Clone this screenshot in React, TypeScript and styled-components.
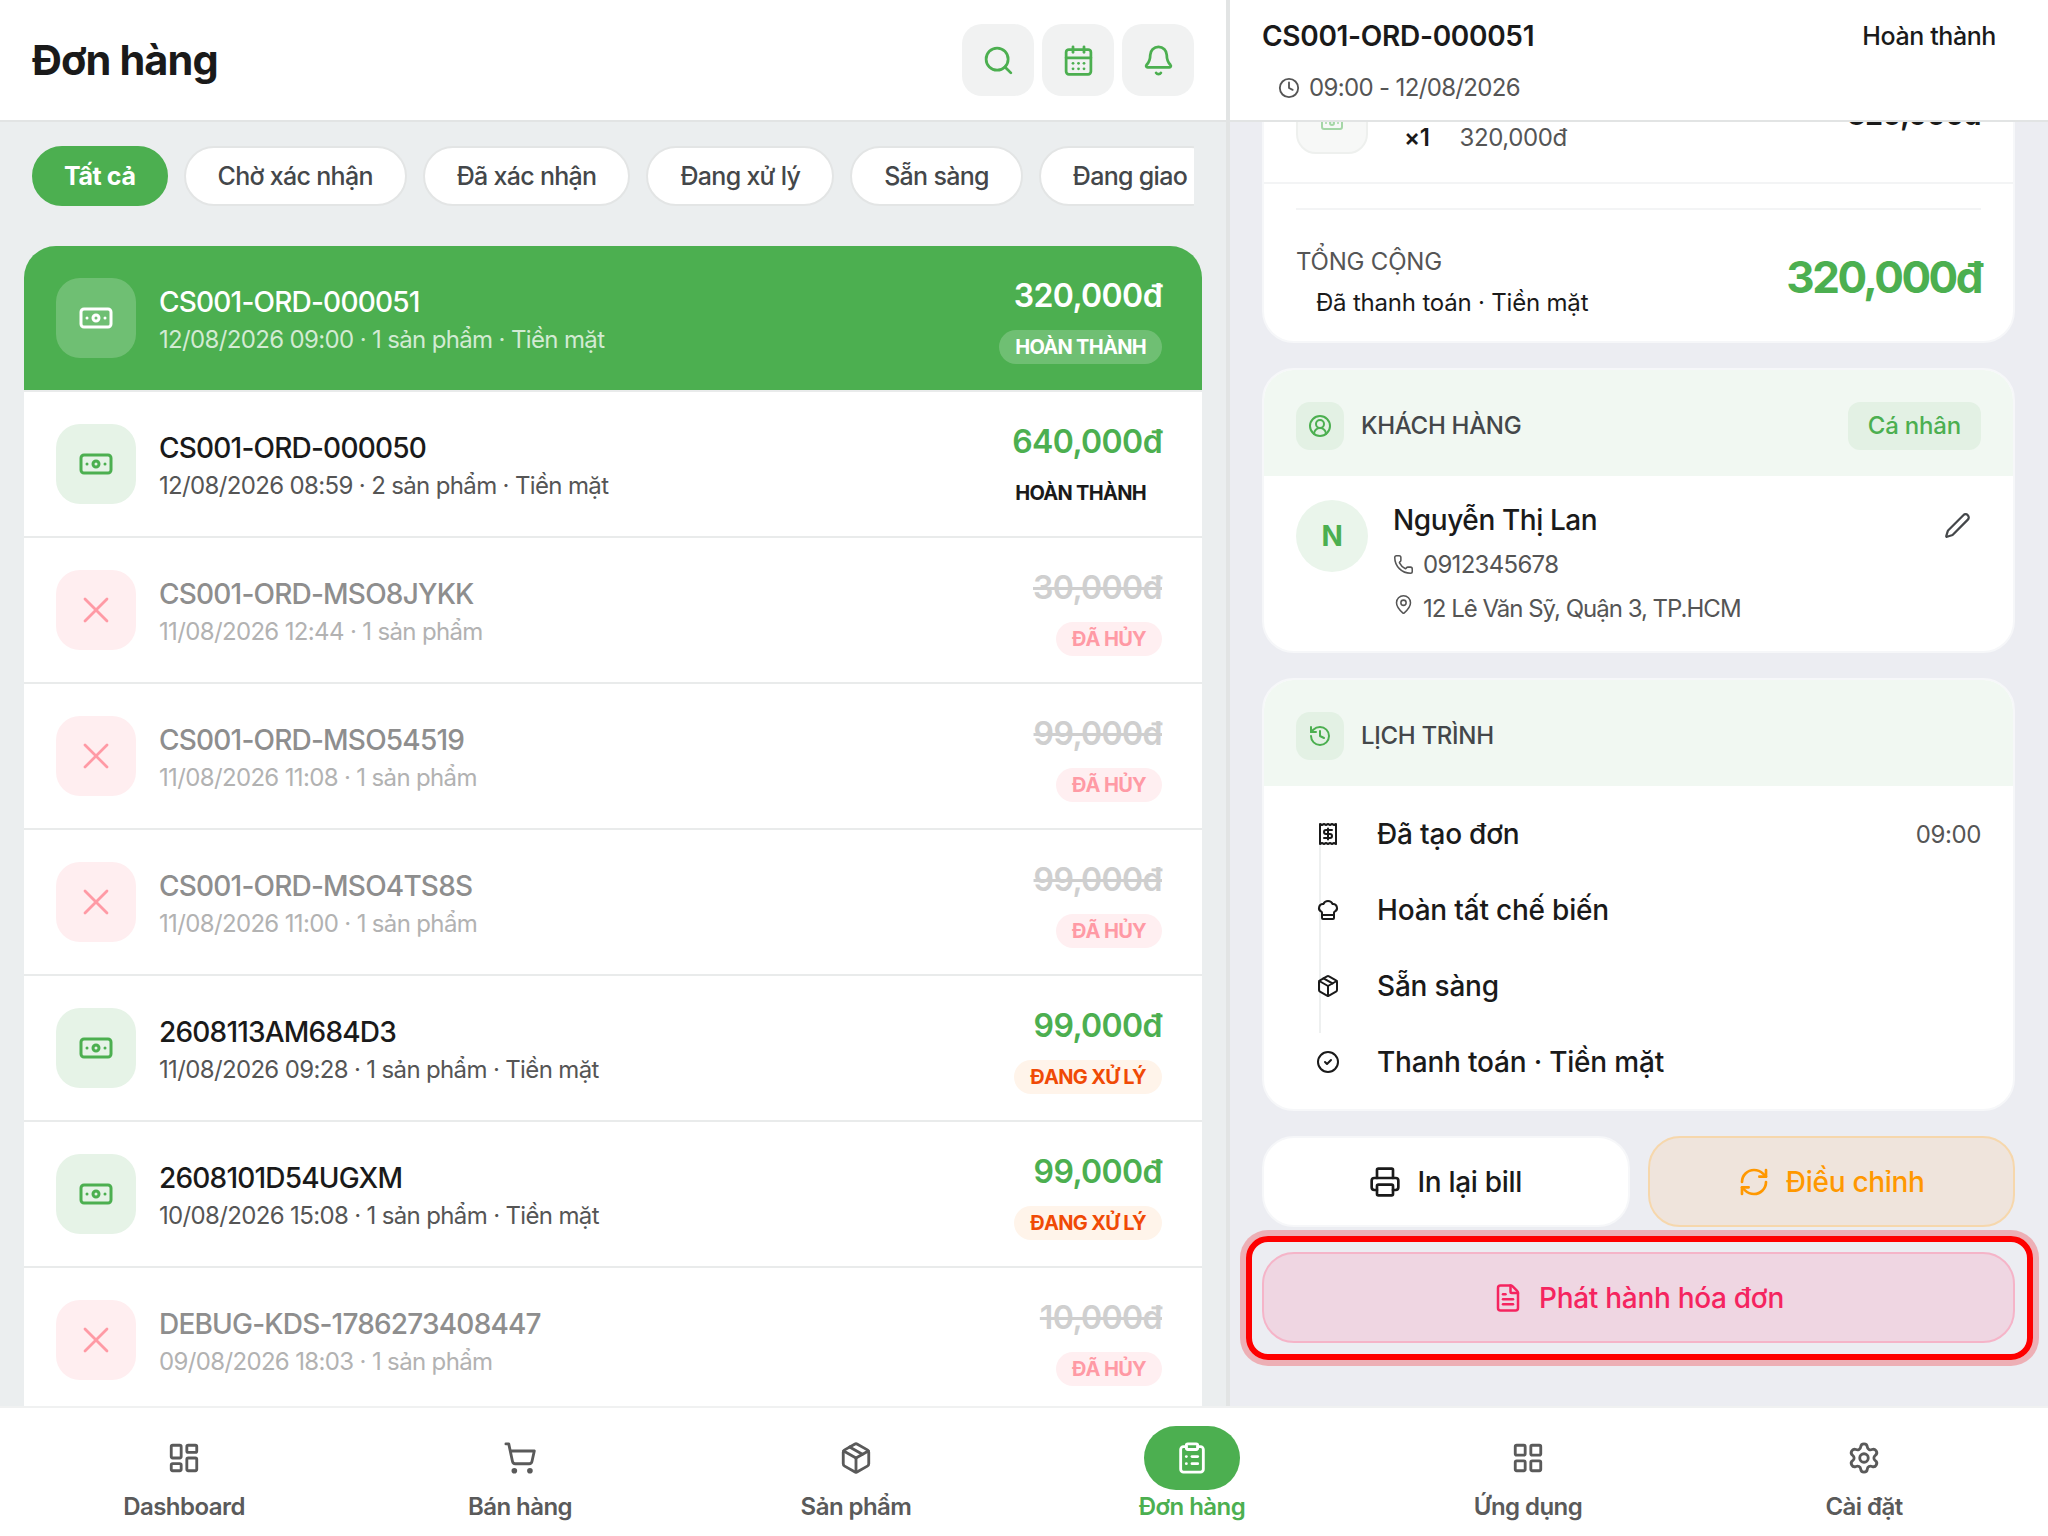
import React from 'react'
import styled, { createGlobalStyle } from 'styled-components'
import {
  Search, CalendarDays, Bell, Banknote, X, CircleUserRound, History, Receipt, ChefHat, Package,
  CircleCheck, Printer, RefreshCw, FileText, LayoutDashboard, ShoppingCart, ClipboardList, LayoutGrid,
  Settings, Phone, MapPin, Pen, Clock,
} from 'lucide-react'

const GlobalStyle = createGlobalStyle`
  html, body { margin: 0; padding: 0; background: #fff; }
  * { box-sizing: border-box; }
  body { font-family: Inter, "Noto Sans", sans-serif; color: #1a1a1a; letter-spacing: -0.4px; }
`

const GREEN = '#4caf50'

const Page = styled.div`
  width: 2048px;
  height: 1536px;
  display: flex;
  flex-direction: column;
  overflow: hidden;
`

const Main = styled.div`
  flex: 1;
  min-height: 0;
  display: flex;
`

const LeftPane = styled.section`
  width: 1226px;
  display: flex;
  flex-direction: column;
  background: #ebeeef;
`

const TopBar = styled.header`
  height: 122px;
  flex: none;
  display: flex;
  align-items: center;
  justify-content: space-between;
  padding: 0 32px;
  background: #fff;
  border-bottom: 2px solid #e2e4e4;
`

const Title = styled.h1`
  margin: 0 0 1px;
  font-size: 41.5px;
  font-weight: 700;
  letter-spacing: -0.9px;
`

const IconActions = styled.div`
  display: flex;
  gap: 8px;
`

const IconAction = styled.button`
  width: 72px;
  height: 72px;
  border: 0;
  padding: 0;
  border-radius: 20px;
  background: #f1f2f2;
  color: ${GREEN};
  display: flex;
  align-items: center;
  justify-content: center;
`

const Chips = styled.div`
  flex: none;
  display: flex;
  gap: 16px;
  margin: 24px 32px 40px;
  overflow: hidden;
`

const Chip = styled.div<{ $active?: boolean }>`
  flex: none;
  height: 60px;
  padding: 0 ${(p) => (p.$active ? 30 : 32)}px;
  display: flex;
  align-items: center;
  border-radius: 30px;
  font-size: 25px;
  font-weight: ${(p) => (p.$active ? 700 : 500)};
  letter-spacing: ${(p) => (p.$active ? -0.4 : -0.7)}px;
  background: ${(p) => (p.$active ? GREEN : '#fff')};
  color: ${(p) => (p.$active ? '#fff' : '#44474a')};
  border: 2px solid ${(p) => (p.$active ? GREEN : '#e3e5e5')};
`

const OrderList = styled.div`
  flex: 1;
  min-height: 0;
  margin: 0 24px;
  border-radius: 32px 32px 0 0;
  overflow: hidden;
`

type Kind = 'selected' | 'normal' | 'cancelled'

const Row = styled.div<{ $kind: Kind }>`
  height: 146px;
  display: flex;
  align-items: center;
  padding: 0 40px 0 32px;
  background: ${(p) => (p.$kind === 'selected' ? GREEN : '#fff')};
  border-bottom: 2px solid #e9ebeb;
`

const RowIcon = styled.div<{ $kind: Kind }>`
  flex: none;
  width: 80px;
  height: 80px;
  border-radius: 24px;
  display: flex;
  align-items: center;
  justify-content: center;
  margin-right: 23px;
  background: ${(p) => (p.$kind === 'selected' ? 'rgba(255,255,255,.2)' : p.$kind === 'cancelled' ? '#ffeef0' : '#e6f3e7')};
  color: ${(p) => (p.$kind === 'selected' ? '#fff' : p.$kind === 'cancelled' ? '#ff9aa5' : GREEN)};
`

const RowText = styled.div`
  flex: 1;
  min-width: 0;
  padding-top: 4px;
`

const OrderCode = styled.div<{ $kind: Kind }>`
  font-size: 28px;
  line-height: 36px;
  font-weight: 500;
  letter-spacing: -0.8px;
  color: ${(p) => (p.$kind === 'selected' ? '#fff' : p.$kind === 'cancelled' ? '#8e8e8e' : '#1a1a1a')};
`

const OrderMeta = styled.div<{ $kind: Kind }>`
  margin-top: 4px;
  font-size: 24px;
  line-height: 32px;
  letter-spacing: -0.65px;
  color: ${(p) => (p.$kind === 'selected' ? 'rgba(255,255,255,.75)' : p.$kind === 'cancelled' ? '#b2b2b2' : '#555')};
`

const RowRight = styled.div`
  display: flex;
  flex-direction: column;
  align-items: flex-end;
  gap: 14px;
  margin-top: 3px;
`

const Amount = styled.div<{ $kind: Kind }>`
  font-size: 32px;
  line-height: 40px;
  font-weight: 600;
  letter-spacing: -0.6px;
  color: ${(p) => (p.$kind === 'selected' ? '#fff' : p.$kind === 'cancelled' ? '#cfcfcf' : GREEN)};
  text-decoration: ${(p) => (p.$kind === 'cancelled' ? 'line-through' : 'none')};
`

type Tone = 'onGreen' | 'plain' | 'cancel' | 'busy'

const Badge = styled.div<{ $tone: Tone }>`
  height: 34px;
  padding: 0 16px;
  display: flex;
  align-items: center;
  border-radius: 17px;
  font-size: 20px;
  font-weight: 700;
  letter-spacing: -0.7px;
  background: ${(p) => ({ onGreen: 'rgba(255,255,255,.2)', plain: 'transparent', cancel: '#ffeff1', busy: '#fff4ea' })[p.$tone]};
  color: ${(p) => ({ onGreen: '#fff', plain: '#1a1a1a', cancel: '#ff9aa5', busy: '#f04a06' })[p.$tone]};
`

const RightPane = styled.section`
  flex: 1;
  min-width: 0;
  display: flex;
  flex-direction: column;
  background: #ecedf2;
  border-left: 4px solid #e2e4e4;
`

const DetailHead = styled.header`
  flex: none;
  height: 122px;
  padding: 20px 52px 0 32px;
  background: #fff;
  border-bottom: 2px solid #e2e4e4;
`

const HeadLine = styled.div`
  display: flex;
  justify-content: space-between;
  align-items: center;
  height: 32px;
`

const DetailCode = styled.div`
  font-size: 28px;
  font-weight: 600;
  letter-spacing: -0.3px;
`

const DetailStatus = styled.div`
  font-size: 25px;
  font-weight: 500;
`

const TimeLine = styled.div`
  display: flex;
  align-items: center;
  gap: 9px;
  margin: 21px 0 0 16px;
  font-size: 24px;
  letter-spacing: -0.65px;
  color: #555;
`

const DetailBody = styled.div`
  flex: 1;
  min-height: 0;
  overflow: hidden;
  display: flex;
  flex-direction: column;
  justify-content: flex-end;
  gap: 25px;
  padding: 0 33px 63px 32px;
`

const Card = styled.div`
  flex: none;
  background: #fff;
  border-radius: 32px;
  border: 2px solid #f6f7f9;
  overflow: hidden;
`

const ItemRow = styled.div`
  display: flex;
  align-items: flex-end;
  padding: 0 32px 28px;
  border-bottom: 2px solid #f3f4f5;
`

const ItemThumb = styled.div`
  flex: none;
  width: 72px;
  height: 72px;
  border-radius: 20px;
  background: #f7f8f7;
  border: 2px solid #eef0ee;
  color: #a5d6a7;
  display: flex;
  align-items: center;
  justify-content: center;
  margin-right: 36px;
  svg {
    margin-top: 10px;
  }
`

const ItemQty = styled.div`
  font-size: 24px;
  font-weight: 600;
  line-height: 30px;
  margin: 0 30px 1px 0;
`

const ItemUnit = styled.div`
  flex: 1;
  font-size: 24px;
  line-height: 30px;
  color: #555;
  margin-bottom: 1px;
`

const ItemTotal = styled.div`
  font-size: 28px;
  line-height: 34px;
  font-weight: 700;
  margin-bottom: 22px;
`

const TotalBlock = styled.div`
  margin: 24px 32px 0;
  padding: 37px 0 23px;
  border-top: 2px solid #f3f4f5;
  display: flex;
  justify-content: space-between;
  align-items: center;
`

const TotalLabel = styled.div`
  font-size: 24px;
  line-height: 30px;
  letter-spacing: -0.2px;
  color: #555;
`

const TotalNote = styled.div`
  font-size: 24px;
  line-height: 30px;
  letter-spacing: -0.2px;
  margin: 11px 0 0 20px;
`

const TotalAmount = styled.div`
  font-size: 44px;
  font-weight: 700;
  color: ${GREEN};
  letter-spacing: -2.5px;
  margin-bottom: 11px;
`

const CardHead = styled.div`
  height: 106px;
  display: flex;
  align-items: center;
  padding: 5px 32px 0;
  background: #f1f8f2;
`

const CardHeadIcon = styled.div`
  flex: none;
  width: 48px;
  height: 48px;
  border-radius: 14px;
  background: #e3f1e4;
  color: ${GREEN};
  display: flex;
  align-items: center;
  justify-content: center;
  margin-right: 17px;
`

const CardHeadTitle = styled.div`
  flex: 1;
  font-size: 24px;
  font-weight: 500;
  letter-spacing: -0.3px;
  color: #44474a;
`

const TypeTag = styled.div`
  height: 48px;
  padding: 0 20px;
  display: flex;
  align-items: center;
  border-radius: 12px;
  background: #e3f1e4;
  color: ${GREEN};
  font-size: 24px;
  font-weight: 500;
  letter-spacing: -0.2px;
`

const CustomerBody = styled.div`
  display: flex;
  padding: 24px 32px 0;
  height: 175px;
`

const Avatar = styled.div`
  flex: none;
  width: 72px;
  height: 72px;
  border-radius: 50%;
  background: #eaf5eb;
  color: ${GREEN};
  font-size: 28px;
  font-weight: 700;
  display: flex;
  align-items: center;
  justify-content: center;
  margin-right: 25px;
`

const CustomerInfo = styled.div`
  flex: 1;
`

const CustomerName = styled.div`
  font-size: 28px;
  font-weight: 500;
  line-height: 36px;
  margin: 2px 0 4px;
`

const InfoLine = styled.div`
  display: flex;
  align-items: center;
  gap: 9px;
  height: 44px;
  font-size: 24px;
  letter-spacing: -0.7px;
  color: #555;
`

const AddressLine = styled(InfoLine)`
  letter-spacing: -1px;
  svg {
    margin-top: -8px;
  }
`

const EditButton = styled.div`
  flex: none;
  color: #44474a;
  padding: 12px 10px 0 0;
`

const Timeline = styled.div`
  position: relative;
  padding: 10px 32px 9px 52px;
  &::before {
    content: '';
    position: absolute;
    left: 55px;
    top: 56px;
    height: 191px;
    width: 2px;
    background: #eef0f0;
  }
`

const StepRow = styled.div`
  position: relative;
  height: 76px;
  display: flex;
  align-items: center;
  color: #1a1a1a;
`

const StepLabel = styled.div`
  flex: 1;
  margin-left: 37px;
  font-size: 28px;
  font-weight: 500;
  letter-spacing: -0.2px;
`

const StepTime = styled.div`
  font-size: 24px;
  color: #555;
`

const ButtonRow = styled.div`
  flex: none;
  display: flex;
  gap: 18px;
`

type BtnTone = 'white' | 'amber' | 'pink'

const ActionButton = styled.div<{ $tone: BtnTone }>`
  flex: 1;
  height: 91px;
  position: relative;
  display: flex;
  align-items: center;
  justify-content: center;
  gap: 16px;
  border-radius: 32px;
  font-size: 28px;
  font-weight: 500;
  letter-spacing: -0.3px;
  background: ${(p) => ({ white: '#fff', amber: '#efe4dc', pink: '#efd6e2' })[p.$tone]};
  color: ${(p) => ({ white: '#1a1a1a', amber: '#ff9800', pink: '#f5245f' })[p.$tone]};
  border: 2px solid ${(p) => ({ white: '#f6f7f9', amber: '#f6d7ac', pink: '#f5b4c8' })[p.$tone]};
`

const HighlightedButton = styled(ActionButton)`
  flex: none;
  &::after {
    content: '';
    position: absolute;
    inset: -18px -20px -19px -18px;
    border: 6px solid #fe0000;
    border-radius: 22px;
    box-shadow: 0 0 0 6px rgba(240, 60, 70, 0.35);
    pointer-events: none;
  }
`

const BottomNav = styled.nav`
  flex: none;
  height: 130px;
  padding: 0 16px;
  display: grid;
  grid-template-columns: repeat(6, 1fr);
  background: #fff;
  border-top: 2px solid #f0f1f1;
`

const NavItem = styled.div<{ $active?: boolean }>`
  display: flex;
  flex-direction: column;
  align-items: center;
  padding-top: 18px;
  font-size: 24px;
  font-weight: 600;
  letter-spacing: -0.55px;
  color: ${(p) => (p.$active ? GREEN : '#5a5a5a')};
`

const NavIcon = styled.div<{ $active?: boolean }>`
  width: 96px;
  height: 64px;
  border-radius: 32px;
  display: flex;
  align-items: center;
  justify-content: center;
  margin-bottom: 2px;
  background: ${(p) => (p.$active ? GREEN : 'transparent')};
  color: ${(p) => (p.$active ? '#fff' : '#5a5a5a')};
`

const orders: { code: string; meta: string; amount: string; kind: Kind; status: string; tone: Tone }[] = [
  { code: 'CS001-ORD-000051', meta: '12/08/2026 09:00 · 1 sản phẩm · Tiền mặt', amount: '320,000đ', kind: 'selected', status: 'HOÀN THÀNH', tone: 'onGreen' },
  { code: 'CS001-ORD-000050', meta: '12/08/2026 08:59 · 2 sản phẩm · Tiền mặt', amount: '640,000đ', kind: 'normal', status: 'HOÀN THÀNH', tone: 'plain' },
  { code: 'CS001-ORD-MSO8JYKK', meta: '11/08/2026 12:44 · 1 sản phẩm', amount: '30,000đ', kind: 'cancelled', status: 'ĐÃ HỦY', tone: 'cancel' },
  { code: 'CS001-ORD-MSO54519', meta: '11/08/2026 11:08 · 1 sản phẩm', amount: '99,000đ', kind: 'cancelled', status: 'ĐÃ HỦY', tone: 'cancel' },
  { code: 'CS001-ORD-MSO4TS8S', meta: '11/08/2026 11:00 · 1 sản phẩm', amount: '99,000đ', kind: 'cancelled', status: 'ĐÃ HỦY', tone: 'cancel' },
  { code: '2608113AM684D3', meta: '11/08/2026 09:28 · 1 sản phẩm · Tiền mặt', amount: '99,000đ', kind: 'normal', status: 'ĐANG XỬ LÝ', tone: 'busy' },
  { code: '2608101D54UGXM', meta: '10/08/2026 15:08 · 1 sản phẩm · Tiền mặt', amount: '99,000đ', kind: 'normal', status: 'ĐANG XỬ LÝ', tone: 'busy' },
  { code: 'DEBUG-KDS-1786273408447', meta: '09/08/2026 18:03 · 1 sản phẩm', amount: '10,000đ', kind: 'cancelled', status: 'ĐÃ HỦY', tone: 'cancel' },
]

const chips = ['Tất cả', 'Chờ xác nhận', 'Đã xác nhận', 'Đang xử lý', 'Sẵn sàng', 'Đang giao']

const steps = [
  { icon: Receipt, label: 'Đã tạo đơn', time: '09:00' },
  { icon: ChefHat, label: 'Hoàn tất chế biến' },
  { icon: Package, label: 'Sẵn sàng' },
  { icon: CircleCheck, label: 'Thanh toán · Tiền mặt' },
]

const navItems = [
  { icon: LayoutDashboard, label: 'Dashboard' },
  { icon: ShoppingCart, label: 'Bán hàng' },
  { icon: Package, label: 'Sản phẩm' },
  { icon: ClipboardList, label: 'Đơn hàng', active: true },
  { icon: LayoutGrid, label: 'Ứng dụng' },
  { icon: Settings, label: 'Cài đặt' },
]

export default function App() {
  return (
    <Page>
      <GlobalStyle />
      <Main>
        <LeftPane>
          <TopBar>
            <Title>Đơn hàng</Title>
            <IconActions>
              <IconAction><Search size={33} strokeWidth={2} /></IconAction>
              <IconAction><CalendarDays size={33} strokeWidth={2} /></IconAction>
              <IconAction><Bell size={33} strokeWidth={2} /></IconAction>
            </IconActions>
          </TopBar>
          <Chips>
            {chips.map((c, i) => (
              <Chip key={c} $active={i === 0}>{c}</Chip>
            ))}
          </Chips>
          <OrderList>
            {orders.map((o) => (
              <Row key={o.code} $kind={o.kind}>
                <RowIcon $kind={o.kind}>
                  {o.kind === 'cancelled' ? <X size={44} strokeWidth={1.5} /> : <Banknote size={36} strokeWidth={2} />}
                </RowIcon>
                <RowText>
                  <OrderCode $kind={o.kind}>{o.code}</OrderCode>
                  <OrderMeta $kind={o.kind}>{o.meta}</OrderMeta>
                </RowText>
                <RowRight>
                  <Amount $kind={o.kind}>{o.amount}</Amount>
                  <Badge $tone={o.tone}>{o.status}</Badge>
                </RowRight>
              </Row>
            ))}
          </OrderList>
        </LeftPane>

        <RightPane>
          <DetailHead>
            <HeadLine>
              <DetailCode>CS001-ORD-000051</DetailCode>
              <DetailStatus>Hoàn thành</DetailStatus>
            </HeadLine>
            <TimeLine>
              <Clock size={22} strokeWidth={2} />
              09:00 - 12/08/2026
            </TimeLine>
          </DetailHead>

          <DetailBody>
            <Card>
              <ItemRow>
                <ItemThumb><Banknote size={24} /></ItemThumb>
                <ItemQty>×1</ItemQty>
                <ItemUnit>320,000đ</ItemUnit>
                <ItemTotal>320,000đ</ItemTotal>
              </ItemRow>
              <TotalBlock>
                <div>
                  <TotalLabel>TỔNG CỘNG</TotalLabel>
                  <TotalNote>Đã thanh toán · Tiền mặt</TotalNote>
                </div>
                <TotalAmount>320,000đ</TotalAmount>
              </TotalBlock>
            </Card>

            <Card>
              <CardHead>
                <CardHeadIcon><CircleUserRound size={24} strokeWidth={2} /></CardHeadIcon>
                <CardHeadTitle>KHÁCH HÀNG</CardHeadTitle>
                <TypeTag>Cá nhân</TypeTag>
              </CardHead>
              <CustomerBody>
                <Avatar>N</Avatar>
                <CustomerInfo>
                  <CustomerName>Nguyễn Thị Lan</CustomerName>
                  <InfoLine><Phone size={21} strokeWidth={1.75} />0912345678</InfoLine>
                  <AddressLine><MapPin size={21} strokeWidth={1.75} />12 Lê Văn Sỹ, Quận 3, TP.HCM</AddressLine>
                </CustomerInfo>
                <EditButton><Pen size={27} strokeWidth={2} /></EditButton>
              </CustomerBody>
            </Card>

            <Card>
              <CardHead>
                <CardHeadIcon><History size={24} strokeWidth={2} /></CardHeadIcon>
                <CardHeadTitle>LỊCH TRÌNH</CardHeadTitle>
              </CardHead>
              <Timeline>
                {steps.map((s) => (
                  <StepRow key={s.label}>
                    <s.icon size={24} strokeWidth={2} />
                    <StepLabel>{s.label}</StepLabel>
                    {s.time && <StepTime>{s.time}</StepTime>}
                  </StepRow>
                ))}
              </Timeline>
            </Card>

            <ButtonRow>
              <ActionButton $tone="white"><Printer size={32} strokeWidth={2} />In lại bill</ActionButton>
              <ActionButton $tone="amber"><RefreshCw size={32} strokeWidth={2} />Điều chỉnh</ActionButton>
            </ButtonRow>
            <HighlightedButton $tone="pink"><FileText size={30} strokeWidth={2} />Phát hành hóa đơn</HighlightedButton>
          </DetailBody>
        </RightPane>
      </Main>

      <BottomNav>
        {navItems.map((n) => (
          <NavItem key={n.label} $active={n.active}>
            <NavIcon $active={n.active}><n.icon size={34} strokeWidth={2} /></NavIcon>
            {n.label}
          </NavItem>
        ))}
      </BottomNav>
    </Page>
  )
}
